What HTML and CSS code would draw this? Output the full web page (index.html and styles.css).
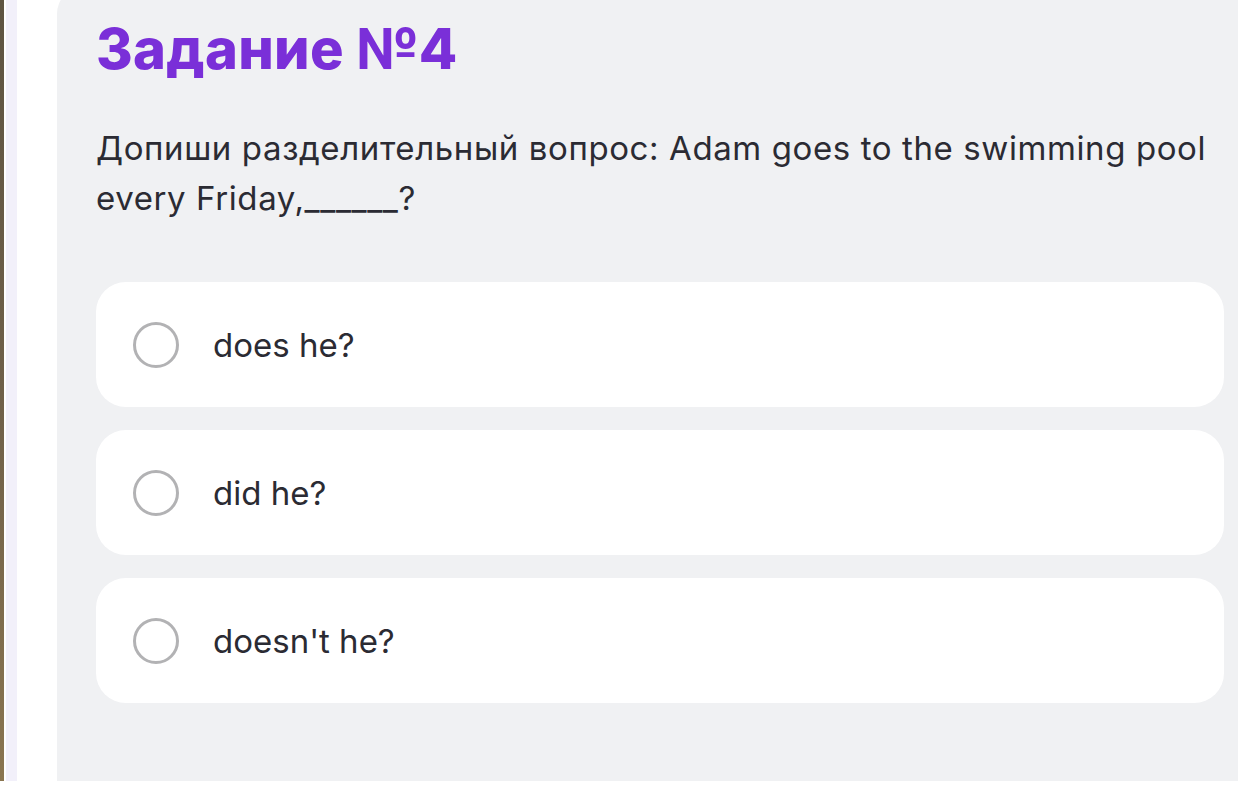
FILE: index.html
```html
<!DOCTYPE html>
<html lang="ru">
<head>
<meta charset="utf-8">
<link rel="stylesheet" href="styles.css">
</head>
<body>
<div class="page">
  <div class="edge">
    <div class="edge-dark"></div>
    <div class="edge-light"></div>
  </div>
  <main class="card">
    <h1 class="title">Задание №4</h1>
    <p class="question">Допиши разделительный вопрос: Adam goes to the swimming pool every Friday,______?</p>
    <div class="options">
      <label class="option"><span class="radio"></span><span class="option-text">does he?</span></label>
      <label class="option"><span class="radio"></span><span class="option-text">did he?</span></label>
      <label class="option"><span class="radio"></span><span class="option-text">doesn't he?</span></label>
    </div>
  </main>
</div>
</body>
</html>
```

FILE: styles.css
```css
html, body {
  margin: 0;
  padding: 0;
  background: #ffffff;
  overflow: hidden;
  width: 1238px;
  height: 789px;
}

.page {
  display: flex;
  height: 781px;
  width: 1290px;
}

.edge {
  display: flex;
  width: 57px;
  flex: none;
}

.edge-dark {
  width: 4px;
  background: linear-gradient(#5e5442, #6f6049 50%, #8a7550);
}

.edge-light {
  width: 11px;
  margin-left: 2px;
  background: #f2f0fa;
}

.card {
  flex: none;
  width: 1211px;
  box-sizing: border-box;
  margin-top: -14px;
  height: 795px;
  background: #f0f1f3;
  border-radius: 28px 28px 0 0;
  padding: 29px 44px 0 39px;
  font-family: Inter, "Noto Sans", sans-serif;
  color: #2b2b33;
}

.title {
  margin: 0;
  font-size: 56px;
  font-weight: 800;
  line-height: 68px;
  color: #7a2fd8;
  letter-spacing: 0.3px;
}

.question {
  margin: 40px 0 0;
  font-size: 33px;
  line-height: 50px;
  font-weight: 400;
  letter-spacing: 0.6px;
  width: 1128px;
}

.options {
  margin-top: 59px;
  display: flex;
  flex-direction: column;
  gap: 23px;
}

.option {
  display: flex;
  align-items: center;
  height: 125px;
  background: #ffffff;
  border-radius: 30px;
  padding-left: 37px;
  box-sizing: border-box;
}

.radio {
  width: 40px;
  height: 40px;
  border: 3px solid #b2b2b4;
  border-radius: 50%;
  flex: none;
}

.option-text {
  margin-left: 34px;
  font-size: 33px;
  color: #2b2b33;
}
```
